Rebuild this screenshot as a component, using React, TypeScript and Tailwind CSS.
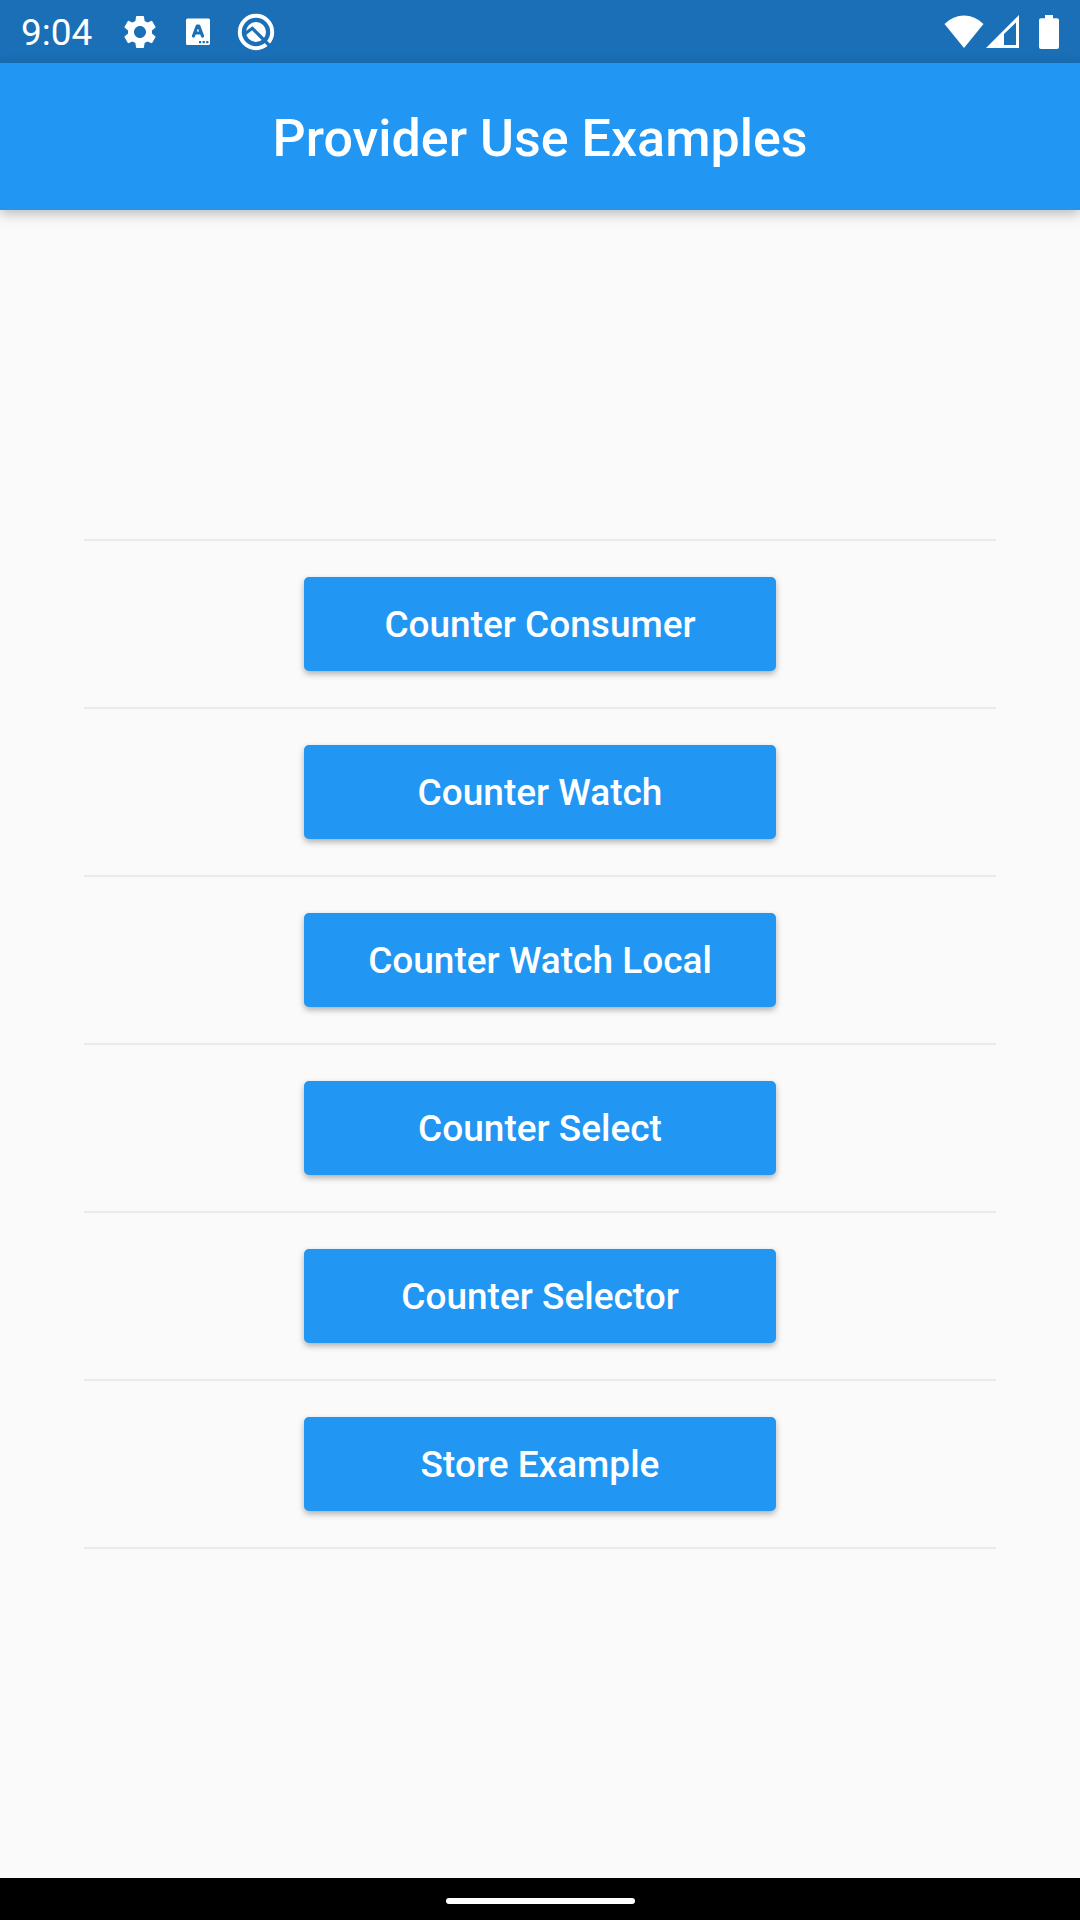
import { MdSettings } from "react-icons/md";

const examples = [
  "Counter Consumer",
  "Counter Watch",
  "Counter Watch Local",
  "Counter Select",
  "Counter Selector",
  "Store Example",
];

function KeyboardIcon() {
  return (
    <svg viewBox="0 0 24 28" className="h-7 w-6" aria-hidden="true">
      <path
        fill="currentColor"
        fillRule="evenodd"
        d="M1.500 0.500H22.500Q24 0.500 24 2V25.500Q24 27 22.500 27H1.500Q0 27 0 25.500V2Q0 0.500 1.500 0.500ZM13 23V25.200H15.200V23ZM16.600 23V25.200H18.800V23ZM20.200 23V25.200H22.400V23Z"
      />
      <path
        d="M7.500 18L11.200 8H12.800L16.500 18M9 15H15"
        fill="none"
        stroke="#1a6fb7"
        strokeWidth="3.200"
        strokeLinecap="round"
        strokeLinejoin="round"
      />
    </svg>
  );
}

function SearchBadgeIcon() {
  return (
    <svg viewBox="0 0 38 38" className="size-[38px]" aria-hidden="true">
      <circle cx="19" cy="19" r="16.200" fill="none" stroke="currentColor" strokeWidth="4" />
      <circle cx="19" cy="19" r="10" fill="currentColor" />
      <path d="M7 21.500L15.300 15.300L35 35" fill="none" stroke="#1a6fb7" strokeWidth="3.200" />
    </svg>
  );
}

function WifiIcon() {
  return (
    <svg viewBox="0 0 40 33" className="h-[33px] w-10" aria-hidden="true">
      <path fill="currentColor" d="M20 33L0.500 9Q9 0.500 20 0.500T39.500 9Z" />
    </svg>
  );
}

function SignalIcon() {
  return (
    <svg viewBox="0 0 33 33" className="size-[33px]" aria-hidden="true">
      <path fill="currentColor" fillRule="evenodd" d="M0 33L33 0V33ZM18 19V30H30V7.500Z" />
    </svg>
  );
}

function BatteryIcon() {
  return (
    <svg viewBox="0 0 20 34" className="h-[34px] w-5" aria-hidden="true">
      <path
        fill="currentColor"
        d="M6 0H14V3.300H18Q20 3.300 20 5.300V32Q20 34 18 34H2Q0 34 0 32V5.300Q0 3.300 2 3.300H6Z"
      />
    </svg>
  );
}

function StatusBar() {
  return (
    <div className="flex h-[63px] items-center justify-between bg-[#1a6fb7] pr-[21px] pl-[21px]">
      <div className="flex items-center">
        <time className="pt-0.5 text-[37px] leading-none">9:04</time>
        <MdSettings className="ml-7 size-10" aria-hidden="true" />
        <div className="ml-[26px]">
          <KeyboardIcon />
        </div>
        <div className="ml-[27px]">
          <SearchBadgeIcon />
        </div>
      </div>
      <div className="flex items-center">
        <WifiIcon />
        <div className="ml-0.5">
          <SignalIcon />
        </div>
        <div className="ml-5">
          <BatteryIcon />
        </div>
      </div>
    </div>
  );
}

export default function App() {
  return (
    <div className="flex min-h-screen flex-col bg-[#fafafa] font-[Roboto,sans-serif] text-white">
      <StatusBar />
      <header className="flex h-[147px] items-center justify-center bg-[#2196f3] pt-1 shadow-[0_4px_12px_rgba(0,0,0,0.25)]">
        <h1 className="text-[52px] leading-none font-medium">Provider Use Examples</h1>
      </header>
      <main className="flex flex-1 flex-col justify-center px-[84px]">
        <ul className="divide-y-2 divide-[#ebebeb] border-y-2 border-[#ebebeb]">
          {examples.map((name) => (
            <li key={name} className="flex justify-center py-9">
              <button
                type="button"
                className="h-[94px] w-[472px] rounded-[5px] bg-[#2196f3] text-[37px] leading-none font-medium shadow-[0_3px_6px_rgba(0,0,0,0.3)]"
              >
                {name}
              </button>
            </li>
          ))}
        </ul>
      </main>
      <footer className="flex h-[42px] items-center justify-center bg-black pt-1">
        <div className="h-1.5 w-[189px] rounded-full bg-white" />
      </footer>
    </div>
  );
}
